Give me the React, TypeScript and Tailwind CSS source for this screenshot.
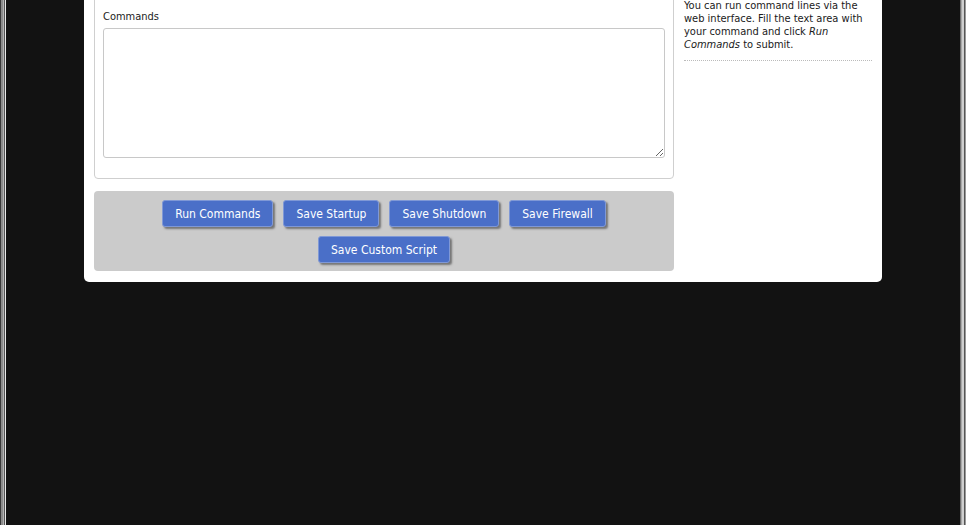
const buttons = ["Run Commands", "Save Startup", "Save Shutdown", "Save Firewall", "Save Custom Script"];

const ActionButton = ({ label }: { label: string }) => (
	<button
		type="button"
		className="h-[27px] px-[12px] rounded-[3px] border border-[#7f98d6] bg-[#4a6fc8] text-white text-[12px] leading-none shadow-[2px_2px_2px_rgba(60,60,60,0.6)]"
	>
		{label}
	</button>
);

export default function App() {
	return (
		<div className="w-[966px] h-[525px] overflow-hidden bg-[#121212] flex font-['DejaVu_Sans_Condensed','Liberation_Sans',Arial,sans-serif]">
			{/* left window frame */}
			<div className="flex h-full">
				<div className="w-px bg-[#3a3a3a]" />
				<div className="w-[2px] bg-[#8c8c8c]" />
				<div className="w-px bg-[#b4b4b4]" />
				<div className="w-px bg-[#555]" />
				<div className="w-px bg-[#e8e8e8]" />
			</div>

			<div className="flex-1 flex justify-center">
				<div className="w-[798px] h-[302px] -mt-[20px] bg-white rounded-b-[5px] flex gap-[10px] pt-[10px] px-[10px] pb-[11px]">
					<div className="w-[580px] flex flex-col">
						<div className="border border-[#cfcfcf] rounded-[4px] pt-[19px] pb-[20px] px-[8px]">
							<p className="text-[11px] leading-[13px] text-[#222]">Commands</p>
							<textarea className="mt-[5px] block w-[562px] h-[130px] border border-[#c8c8c8] rounded-[3px] bg-white outline-none" />
						</div>
						<div className="mt-[12px] h-[80px] bg-[#cbcbcb] rounded-[4px] pt-[9px] px-[60px] flex flex-wrap justify-center content-start gap-x-[10px] gap-y-[9px]">
							{buttons.map((b) => (
								<ActionButton key={b} label={b} />
							))}
						</div>
					</div>

					<div className="w-[189px] pt-[9px]">
						<p className="text-[11px] leading-[13px] text-[#1a1a1a]">
							You can run command lines via the web interface. Fill the text area with your command and click{" "}
							<em>Run Commands</em> to submit.
						</p>
						<div className="mt-[9px] border-b border-dotted border-[#bbb]" />
					</div>
				</div>
			</div>

			{/* right window frame */}
			<div className="flex h-full">
				<div className="w-px bg-[#6e6e6e]" />
				<div className="w-px bg-[#a8a8a8]" />
				<div className="w-[2px] bg-[#cfcfcf]" />
				<div className="w-px bg-[#555]" />
				<div className="w-px bg-[#9a9a9a]" />
			</div>
		</div>
	);
}
